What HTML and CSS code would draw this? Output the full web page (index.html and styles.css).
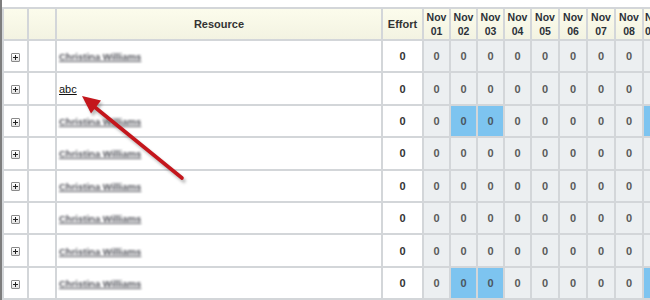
FILE: index.html
```html
<!DOCTYPE html>
<html>
<head>
<meta charset="utf-8">
<link rel="stylesheet" href="styles.css">
</head>
<body>
<div class="frame">
  <table class="grid">
    <colgroup>
      <col class="c-exp"><col class="c-blank"><col class="c-res"><col class="c-eff">
      <col class="c-d25"><col class="c-d25"><col class="c-d25"><col class="c-d25">
      <col class="c-d26"><col class="c-d26"><col class="c-d26"><col class="c-d26">
      <col class="c-last">
    </colgroup>
    <thead>
      <tr>
        <th></th><th></th><th>Resource</th><th>Effort</th>
        <th class="day">Nov<br>01</th><th class="day">Nov<br>02</th><th class="day">Nov<br>03</th><th class="day">Nov<br>04</th>
        <th class="day">Nov<br>05</th><th class="day">Nov<br>06</th><th class="day">Nov<br>07</th><th class="day">Nov<br>08</th>
        <th class="day edge">Nov<br>09</th>
      </tr>
    </thead>
    <tbody id="rows"></tbody>
  </table>
  <svg class="arrow" width="200" height="200" viewBox="0 0 200 200">
    <g class="shadow" transform="translate(2,3)">
      <line x1="178" y1="178" x2="90" y2="106.5"/>
      <polygon points="78,96 97,100.5 87,113.5"/>
    </g>
    <g class="red">
      <line x1="178" y1="178" x2="90" y2="106.5"/>
      <polygon points="78,96 97,100.5 87,113.5"/>
    </g>
  </svg>
</div>
<script src="app.js"></script>
</body>
</html>
```
FILE: app.js
```js
var names = ["Christina Williams","abc","Christina Williams","Christina Williams","Christina Williams","Christina Williams","Christina Williams","Christina Williams"];
var blueRows = {2:true, 7:true};
var tbody = document.getElementById("rows");
var html = "";
for (var i = 0; i < names.length; i++) {
  var isAbc = names[i] === "abc";
  html += '<tr><td class="exp"><span class="plus"></span></td><td class="blank"></td>';
  html += '<td class="res"><a class="' + (isAbc ? "name" : "name blur") + '">' + names[i] + '</a></td>';
  html += '<td class="eff">0</td>';
  for (var d = 1; d <= 9; d++) {
    var blue = blueRows[i] && (d === 2 || d === 3 || d === 9);
    html += '<td class="val' + (blue ? ' hi' : '') + '">' + (d === 9 ? '' : '0') + '</td>';
  }
  html += '</tr>';
}
tbody.innerHTML = html;
```
FILE: styles.css
```css
html, body {
  margin: 0;
  padding: 0;
  background: #fff;
  overflow: hidden;
}
.frame {
  position: relative;
  height: 300px;
  width: 648px;
  border-left: 2px solid #7d7d7d;
  padding-top: 7px;
  overflow: hidden;
  font-family: "Liberation Sans", Arial, sans-serif;
}
.grid {
  table-layout: fixed;
  width: 684px;
  border-collapse: separate;
  border-spacing: 2px;
  background: #d3d6d9;
}
.c-exp { width: 23px; }
.c-blank { width: 26px; }
.c-res { width: 324px; }
.c-eff { width: 39px; }
.c-d25 { width: 25px; }
.c-d26 { width: 26px; }
.c-last { width: 40px; }
th, td {
  padding: 0;
  text-align: center;
  vertical-align: middle;
  overflow: hidden;
  white-space: nowrap;
}
th {
  height: 30px;
  background: linear-gradient(#fcfcec, #f3f3e2);
  color: #333;
  font-size: 11px;
  font-weight: bold;
}
th.day {
  font-size: 10.5px;
  line-height: 14px;
  color: #2b3138;
}
th.day.edge {
  text-align: left;
  padding-left: 1px;
}
td {
  height: 30.4px;
  background: #fff;
  font-size: 11px;
}
.plus {
  display: inline-block;
  position: relative;
  width: 7px;
  height: 7px;
  border: 1px solid #8a8a8a;
  background: linear-gradient(#ffffff, #e2e2e2);
  vertical-align: middle;
  border-radius: 1px;
}
.plus::before, .plus::after {
  content: "";
  position: absolute;
  background: #222;
}
.plus::before { left: 1px; top: 3px; width: 5px; height: 1px; }
.plus::after { left: 3px; top: 1px; width: 1px; height: 5px; }
td.res {
  text-align: left;
  padding-left: 2px;
}
.name {
  color: #111;
  text-decoration: underline;
  font-size: 11px;
}
.name.blur {
  color: #4f5058;
  font-size: 9.5px;
  font-weight: bold;
  filter: blur(1.2px);
}
td.eff {
  font-weight: bold;
  color: #333;
}
td.val {
  background: #eceff1;
  font-weight: bold;
  color: #5a5a5a;
}
td.val.hi {
  background: #7dc4f0;
  color: #4a5560;
}
.arrow {
  position: absolute;
  left: 2px;
  top: 0;
  overflow: visible;
  pointer-events: none;
}
.arrow line { stroke-width: 3.6px; stroke-linecap: round; }
.arrow .red line { stroke: #c4161c; }
.arrow .red polygon { fill: #c4161c; }
.arrow .shadow { opacity: 0.4; filter: blur(1.6px); }
.arrow .shadow line { stroke: #555; }
.arrow .shadow polygon { fill: #555; }
```
